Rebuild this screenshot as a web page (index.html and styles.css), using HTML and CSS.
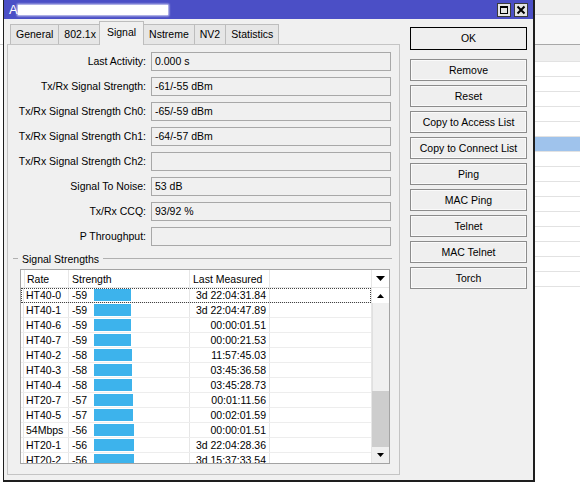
FILE: index.html
```html
<!DOCTYPE html>
<html>
<head>
<meta charset="utf-8">
<link rel="stylesheet" href="styles.css">
</head>
<body>
<div class="screen">
  <div class="bg-left"><div class="bl-line"></div></div>
  <div class="window">
    <div class="titlebar">
      <div class="title"><span class="title-a">A</span><span class="redact"></span></div>
      <div class="tb-btns">
        <span class="tb-btn"><svg width="12" height="12" viewBox="0 0 12 12"><rect x="2.5" y="2.5" width="7" height="7" fill="none" stroke="#000"/><rect x="2" y="2" width="8" height="2" fill="#000"/></svg></span>
        <span class="tb-btn"><svg width="12" height="12" viewBox="0 0 12 12"><path d="M2.5 2.5 L9.5 9.5 M9.5 2.5 L2.5 9.5" stroke="#000" stroke-width="2"/></svg></span>
      </div>
    </div>
    <div class="win-body">
      <div class="tab-area">
        <div class="tabstrip">
          <span class="tab">General</span>
          <span class="tab">802.1x</span>
          <span class="tab active">Signal</span>
          <span class="tab">Nstreme</span>
          <span class="tab">NV2</span>
          <span class="tab">Statistics</span>
        </div>
        <div class="panel">
          <div class="form">
            <label class="lbl">Last Activity:</label><div class="field">0.000 s</div>
            <label class="lbl">Tx/Rx Signal Strength:</label><div class="field">-61/-55 dBm</div>
            <label class="lbl">Tx/Rx Signal Strength Ch0:</label><div class="field">-65/-59 dBm</div>
            <label class="lbl">Tx/Rx Signal Strength Ch1:</label><div class="field">-64/-57 dBm</div>
            <label class="lbl">Tx/Rx Signal Strength Ch2:</label><div class="field"></div>
            <label class="lbl">Signal To Noise:</label><div class="field">53 dB</div>
            <label class="lbl">Tx/Rx CCQ:</label><div class="field">93/92 %</div>
            <label class="lbl">P Throughput:</label><div class="field"></div>
          </div>
          <div class="group-head"><span>Signal Strengths</span></div>
          <div class="list">
            <div class="list-main">
              <div class="lrow lhead">
                <div class="c c0"></div>
                <div class="c c1">Rate</div>
                <div class="c c2">Strength</div>
                <div class="c c3 left">Last Measured</div>
                <div class="c c4"></div>
              </div>
              <div class="lrow focus"><div class="c c0"></div><div class="c c1">HT40-0</div><div class="c c2"><span class="sv">-59</span><span class="bar" style="width:37px"></span></div><div class="c c3">3d 22:04:31.84</div><div class="c c4"></div></div>
              <div class="lrow"><div class="c c0"></div><div class="c c1">HT40-1</div><div class="c c2"><span class="sv">-59</span><span class="bar" style="width:37px"></span></div><div class="c c3">3d 22:04:47.89</div><div class="c c4"></div></div>
              <div class="lrow"><div class="c c0"></div><div class="c c1">HT40-6</div><div class="c c2"><span class="sv">-59</span><span class="bar" style="width:37px"></span></div><div class="c c3">00:00:01.51</div><div class="c c4"></div></div>
              <div class="lrow"><div class="c c0"></div><div class="c c1">HT40-7</div><div class="c c2"><span class="sv">-59</span><span class="bar" style="width:37px"></span></div><div class="c c3">00:00:21.53</div><div class="c c4"></div></div>
              <div class="lrow"><div class="c c0"></div><div class="c c1">HT40-2</div><div class="c c2"><span class="sv">-58</span><span class="bar" style="width:38px"></span></div><div class="c c3">11:57:45.03</div><div class="c c4"></div></div>
              <div class="lrow"><div class="c c0"></div><div class="c c1">HT40-3</div><div class="c c2"><span class="sv">-58</span><span class="bar" style="width:38px"></span></div><div class="c c3">03:45:36.58</div><div class="c c4"></div></div>
              <div class="lrow"><div class="c c0"></div><div class="c c1">HT40-4</div><div class="c c2"><span class="sv">-58</span><span class="bar" style="width:38px"></span></div><div class="c c3">03:45:28.73</div><div class="c c4"></div></div>
              <div class="lrow"><div class="c c0"></div><div class="c c1">HT20-7</div><div class="c c2"><span class="sv">-57</span><span class="bar" style="width:39px"></span></div><div class="c c3">00:01:11.56</div><div class="c c4"></div></div>
              <div class="lrow"><div class="c c0"></div><div class="c c1">HT40-5</div><div class="c c2"><span class="sv">-57</span><span class="bar" style="width:39px"></span></div><div class="c c3">00:02:01.59</div><div class="c c4"></div></div>
              <div class="lrow"><div class="c c0"></div><div class="c c1">54Mbps</div><div class="c c2"><span class="sv">-56</span><span class="bar" style="width:40px"></span></div><div class="c c3">00:00:01.51</div><div class="c c4"></div></div>
              <div class="lrow"><div class="c c0"></div><div class="c c1">HT20-1</div><div class="c c2"><span class="sv">-56</span><span class="bar" style="width:40px"></span></div><div class="c c3">3d 22:04:28.36</div><div class="c c4"></div></div>
              <div class="lrow"><div class="c c0"></div><div class="c c1">HT20-2</div><div class="c c2"><span class="sv">-56</span><span class="bar" style="width:40px"></span></div><div class="c c3">3d 15:37:33.54</div><div class="c c4"></div></div>
            </div>
            <div class="vscroll">
              <div class="sb-head"><svg width="9" height="5" viewBox="0 0 9 5"><path d="M0 0 H9 L4.5 5 Z" fill="#000"/></svg></div>
              <div class="sb-up"><svg width="7" height="4" viewBox="0 0 7 4"><path d="M0 4 H7 L3.5 0 Z" fill="#000"/></svg></div>
              <div class="sb-track"></div>
              <div class="sb-thumb"></div>
              <div class="sb-down"><svg width="7" height="4" viewBox="0 0 7 4"><path d="M0 0 H7 L3.5 4 Z" fill="#000"/></svg></div>
            </div>
          </div>
        </div>
      </div>
      <div class="actions">
        <div class="btn default">OK</div>
        <div class="btn">Remove</div>
        <div class="btn">Reset</div>
        <div class="btn">Copy to Access List</div>
        <div class="btn">Copy to Connect List</div>
        <div class="btn">Ping</div>
        <div class="btn">MAC Ping</div>
        <div class="btn">Telnet</div>
        <div class="btn">MAC Telnet</div>
        <div class="btn">Torch</div>
      </div>
    </div>
  </div>
  <div class="bg-right">
    <div class="rb-top"></div>
    <div class="rb-bar"></div>
    <div class="rb-head"></div>
    <div class="rb-row"></div><div class="rb-row"></div><div class="rb-row"></div><div class="rb-row"></div><div class="rb-row"></div>
    <div class="rb-row sel"></div>
    <div class="rb-row"></div><div class="rb-row"></div><div class="rb-row"></div><div class="rb-row"></div><div class="rb-row"></div>
    <div class="rb-row"></div><div class="rb-row"></div><div class="rb-row"></div><div class="rb-row"></div>
  </div>
</div>
</body>
</html>
```
FILE: styles.css
```css
* { box-sizing: border-box; }
html, body { margin: 0; padding: 0; }
body {
  width: 580px; height: 484px; overflow: hidden; background: #fff;
  font-family: "Liberation Sans", Arial, sans-serif; font-size: 10.5px; color: #000;
}
.screen { display: flex; width: 580px; height: 484px; align-items: flex-start; }

.bg-left { width: 3px; flex: none; height: 484px; background: #fff; }
.bl-line { height: 45px; border-bottom: 1px solid #cfcfcf; }

.window {
  width: 532px; height: 482px; flex: none;
  display: flex; flex-direction: column;
  background: #f0f0f0;
  border-left: 1px solid #1e1e1e; border-right: 2px solid #1e1e1e; border-bottom: 2px solid #1e1e1e;
}

.titlebar {
  height: 19px; flex: none; background: #4b4fc6;
  display: flex; justify-content: space-between; align-items: flex-start;
}
.title { display: flex; align-items: center; height: 19px; padding-left: 5px; }
.title-a { color: #fff; font-size: 13px; line-height: 13px; }
.redact {
  display: block; width: 150px; height: 10px; background: #fff; margin-left: 0;
  box-shadow: 0 0 2px 1px rgba(255,255,255,0.8);
}
.tb-btns { display: flex; gap: 3px; padding: 3px 5px 0 0; }
.tb-btn {
  width: 14px; height: 14px; border: 1px solid #3a3a3a; background: #e4e4e4;
  display: flex; align-items: center; justify-content: center;
}

.win-body { flex: 1; display: flex; gap: 10px; padding: 2px 6px 0 3px; }

.tab-area { width: 393px; flex: none; display: flex; flex-direction: column; padding-bottom: 5px; }
.tabstrip { height: 23px; display: flex; align-items: flex-end; padding-left: 3px; position: relative; z-index: 1; }
.tab {
  height: 20px; line-height: 19px; padding: 0 5px;
  border: 1px solid #bdbdbd; border-bottom: none; background: #e6e6e6;
  margin-right: -1px; white-space: nowrap;
}
.tab.active {
  height: 24px; line-height: 21px; padding: 0 7px; margin: 0 -1px -1px -2px;
  background: #f0f0f0; position: relative;
}
.panel { flex: 1; border: 1px solid #c4c4c4; padding-top: 7px; }

.form {
  display: grid; grid-template-columns: 138px 1fr; column-gap: 5px; row-gap: 6px;
  padding-right: 8px;
}
.lbl { text-align: right; line-height: 19px; white-space: nowrap; }
.field {
  height: 19px; line-height: 17px; padding-left: 3px;
  border: 1px solid #a8a8a8; background: #f0f0f0;
}

.group-head {
  display: flex; align-items: center; height: 13px; margin: 6px 7px 0 5px;
}
.group-head::before { content: ""; width: 5px; border-top: 1px solid #b0b0b0; margin-right: 4px; }
.group-head::after { content: ""; flex: 1; border-top: 1px solid #b0b0b0; margin-left: 4px; }

.list {
  height: 195px; margin: 4px 9px 0 12px; border: 1px solid #a3a3a3; background: #fff;
  display: flex; overflow: hidden;
}
.list-main { flex: 1; display: flex; flex-direction: column; }
.lrow { display: grid; grid-template-columns: 3px 45px 121px 80px 1fr; height: 15px; flex: none; border-bottom: 1px solid #ededed; }
.lhead { height: 18px; border-bottom: 1px solid #e8e8e8; }
.lhead .c { line-height: 18px; padding-left: 3px; }
.lrow.focus { outline: 1px dotted #444; outline-offset: -1px; }
.c { border-right: 1px solid #e6e6e6; line-height: 15px; white-space: nowrap; overflow: hidden; }
.c4 { border-right: none; }
.c1 { padding-left: 2px; }
.c2 { display: flex; align-items: flex-start; padding-left: 3px; }
.lhead .c2 { display: block; }
.sv { width: 22px; flex: none; }
.bar { height: 12px; margin-top: 1px; background: #3db3ec; }
.c3 { text-align: right; padding-right: 3px; }
.lhead .c3 { text-align: left; }

.vscroll { width: 18px; flex: none; display: flex; flex-direction: column; border-left: 1px solid #e6e6e6; }
.sb-head { height: 18px; flex: none; display: flex; align-items: center; justify-content: center; border-bottom: 1px solid #e8e8e8; }
.sb-up { height: 15px; flex: none; display: flex; align-items: center; justify-content: center; background: #fff; }
.sb-track { height: 88px; flex: none; background: #f0f0f0; border-left: 1px solid #e0e0e0; }
.sb-thumb { height: 56px; flex: none; background: #cdcdcd; }
.sb-down { flex: 1; display: flex; align-items: center; justify-content: center; background: #f0f0f0; }

.actions { width: 117px; flex: none; display: flex; flex-direction: column; gap: 4px; padding-top: 6px; }
.btn {
  height: 22px; line-height: 21px; text-align: center; white-space: nowrap;
  border: 1px solid #8c8c8c; background: #efefef; box-shadow: inset 0 0 0 1px #fafafa;
}
.btn.default { height: 23px; border-color: #000; margin-bottom: 5px; box-shadow: none; }

.bg-right { flex: 1; height: 484px; background: #fff; }
.rb-top { height: 15px; background: #efefef; border-bottom: 1px solid #d8d8d8; }
.rb-bar { height: 30px; background: #f7f7f7; border-bottom: 1px solid #a8a8a8; }
.rb-head { height: 17px; background: #efefef; border-bottom: 1px solid #e2e2e2; }
.rb-row { height: 15px; border-bottom: 1px solid #e2e2e2; }
.rb-row.sel { background: #9fc3ec; }
```
